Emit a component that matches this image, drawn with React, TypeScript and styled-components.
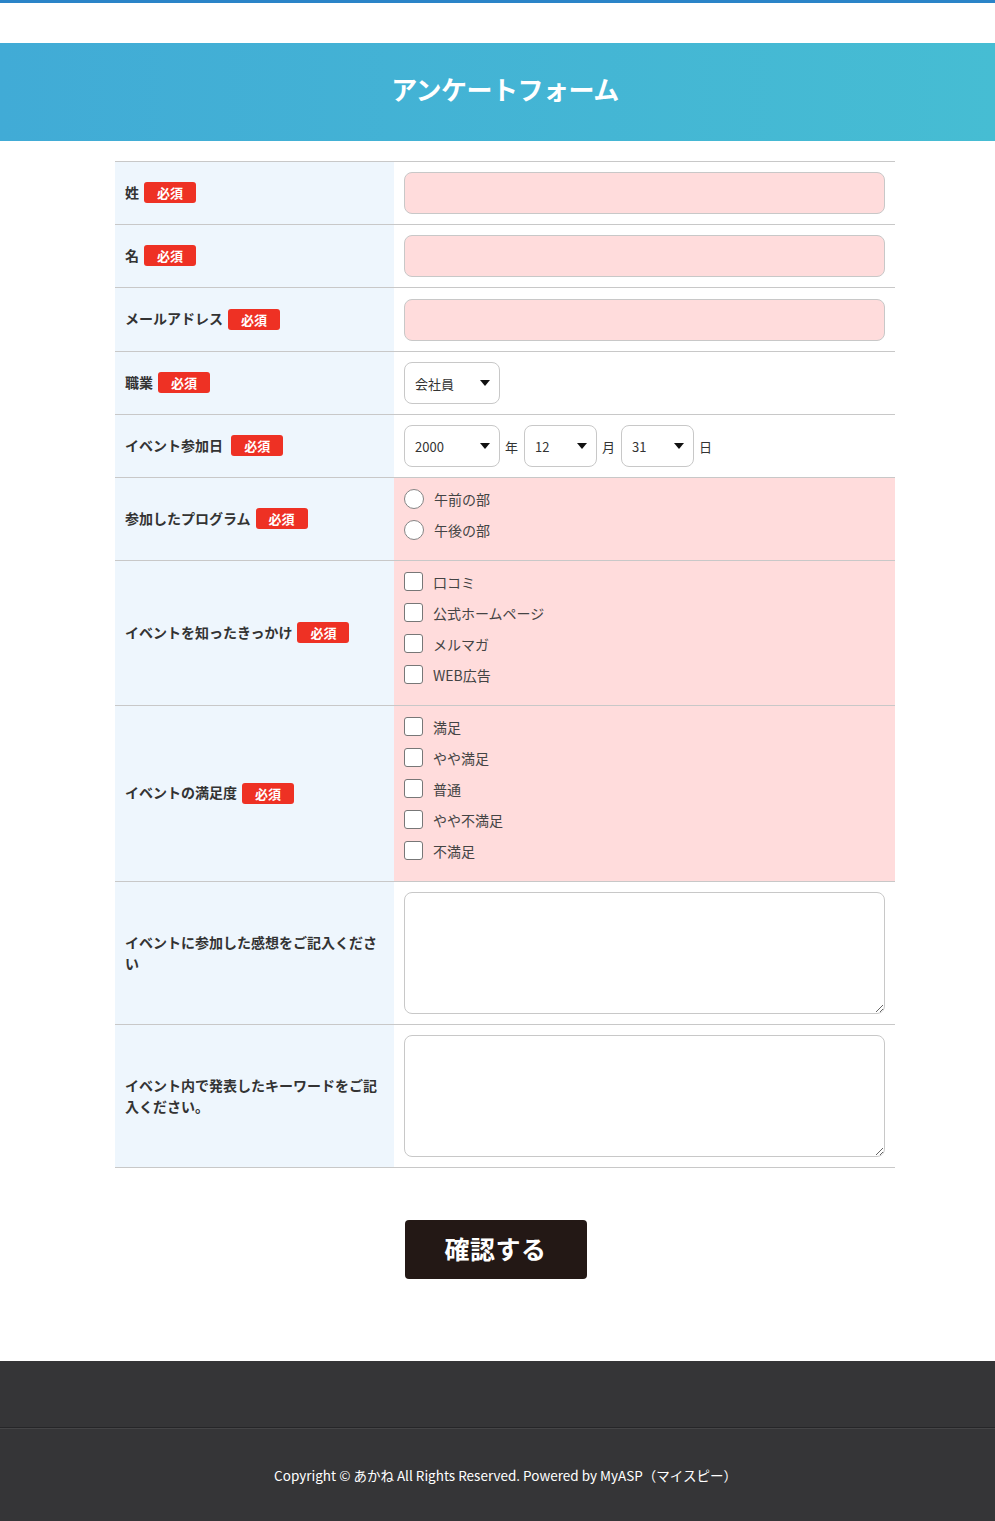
import React from "react";
import styled, { createGlobalStyle } from "styled-components";

const GlobalStyle = createGlobalStyle`
  html, body { margin: 0; padding: 0; }
  body {
    font-family: "Noto Sans CJK JP", "Noto Sans", sans-serif;
    font-size: 14px;
    color: #333;
    background: #fff;
  }
  * { box-sizing: border-box; }
`;

const Page = styled.div`
  border-top: 3px solid #2a84c8;
`;

const Header = styled.header`
  margin-top: 40px;
  height: 98px;
  background: linear-gradient(90deg, #41abd6 0%, #46bdd3 100%);
  display: flex;
  align-items: center;
  justify-content: center;
  padding-left: 15px;
  padding-bottom: 6px;
`;

const Title = styled.h1`
  margin: 0;
  color: #fff;
  font-size: 26px;
  font-weight: 700;
  line-height: 1;
  letter-spacing: -0.5px;
`;

const Main = styled.main`
  padding-left: 15px;
  margin-top: 20px;
`;

const Form = styled.div`
  width: 780px;
  margin: 0 auto;
  border-top: 1px solid #c8c8c8;
`;

const Row = styled.div`
  display: grid;
  grid-template-columns: 279px 1fr;
  border-bottom: 1px solid #c8c8c8;
`;

const LabelCell = styled.div`
  background: #eef6fd;
  padding: 0 10px;
  display: flex;
  align-items: center;
  font-weight: 700;
  font-size: 14px;
  line-height: 21px;
  color: #333;
`;

const LabelText = styled.span`
  white-space: pre-wrap;
`;

const Badge = styled.span`
  display: inline-block;
  vertical-align: middle;
  margin-left: 5px;
  width: 52px;
  height: 21px;
  line-height: 21px;
  text-align: center;
  background: #ee3124;
  color: #fff;
  border-radius: 3px;
  font-size: 13px;
  font-weight: 700;
  font-family: "Noto Sans CJK JP", serif;
  position: relative;
  top: -1px;
`;

const ValueCell = styled.div<{ $pink?: boolean; $choices?: boolean; $tall?: boolean }>`
  background: ${(p) => (p.$pink ? "#ffdcdc" : "#fff")};
  padding: ${(p) => (p.$choices ? "5px 10px 15px" : p.$tall ? "11px 10px 10px" : "10px")};
`;

const TextInput = styled.input`
  display: block;
  width: 100%;
  height: 42px;
  border: 1px solid #c8c8c8;
  border-radius: 8px;
  background: #ffdcdc;
  padding: 0 10px;
  font-size: 14px;
  font-family: inherit;
  outline: none;
`;

const TextArea = styled.textarea`
  display: block;
  width: 100%;
  height: 122px;
  border: 1px solid #c8c8c8;
  border-radius: 8px;
  background: #fff;
  padding: 8px 10px;
  font-size: 14px;
  font-family: inherit;
  resize: vertical;
  outline: none;
  margin: 0;
`;

const SelectWrap = styled.span`
  position: relative;
  display: inline-block;
`;

const Select = styled.select<{ $w: number }>`
  appearance: none;
  -webkit-appearance: none;
  display: block;
  width: ${(p) => p.$w}px;
  height: 42px;
  border: 1px solid #c8c8c8;
  border-radius: 8px;
  background: #fff;
  padding: 0 10px;
  font-size: 13px;
  font-family: inherit;
  color: #333;
  outline: none;
`;

const Arrow = styled.svg`
  position: absolute;
  right: 10px;
  top: 50%;
  margin-top: -3px;
  pointer-events: none;
`;

const DateLine = styled.div`
  display: flex;
  align-items: center;
  gap: 5px;
`;

const Unit = styled.span`
  font-size: 13px;
  color: #333;
  margin-right: 1px;
`;

const OptionList = styled.div`
  display: flex;
  flex-direction: column;
`;

const Option = styled.label`
  display: flex;
  align-items: center;
  gap: 10px;
  height: 31px;
  font-size: 14px;
  color: #444;
`;

const Radio = styled.input.attrs({ type: "radio" })`
  appearance: none;
  -webkit-appearance: none;
  margin: 0;
  width: 20px;
  height: 20px;
  border: 1px solid #858585;
  border-radius: 50%;
  background: #fff;
`;

const Check = styled.input.attrs({ type: "checkbox" })`
  appearance: none;
  -webkit-appearance: none;
  margin: 0;
  width: 19px;
  height: 19px;
  border: 1px solid #777;
  border-radius: 3px;
  background: #fff;
`;

const ButtonArea = styled.div`
  display: flex;
  justify-content: center;
  margin-top: 52px;
  margin-bottom: 82px;
  padding-right: 4px;
`;

const SubmitButton = styled.button`
  width: 182px;
  height: 59px;
  border: none;
  border-radius: 4px;
  background: #231815;
  color: #fff;
  font-family: inherit;
  font-size: 25px;
  font-weight: 700;
  letter-spacing: 0.5px;
  padding: 0 0 4px;
  cursor: pointer;
`;

const Footer = styled.footer`
  background: #353537;
`;

const FooterTop = styled.div`
  height: 67px;
  border-bottom: 1px solid #262628;
`;

const FooterBottom = styled.div`
  height: 93px;
  border-top: 1px solid #454547;
  display: flex;
  align-items: center;
  justify-content: center;
  color: #fff;
  font-size: 13.5px;
  padding-left: 16px;
`;

const ArrowIcon = () => (
  <Arrow width="10" height="6" viewBox="0 0 10 6">
    <path d="M0 0 L10 0 L5 6 Z" fill="#111" />
  </Arrow>
);

const Dropdown: React.FC<{ w: number; value: string; options: string[] }> = ({ w, value, options }) => (
  <SelectWrap>
    <Select $w={w} defaultValue={value}>
      {options.map((o) => (
        <option key={o} value={o}>
          {o}
        </option>
      ))}
    </Select>
    <ArrowIcon />
  </SelectWrap>
);

const Label: React.FC<{ text: string; required?: boolean }> = ({ text, required }) => (
  <LabelCell>
    <LabelText>
      {text}
      {required && <Badge>必須</Badge>}
    </LabelText>
  </LabelCell>
);

const years = Array.from({ length: 60 }, (_, i) => String(1970 + i));
const months = Array.from({ length: 12 }, (_, i) => String(i + 1));
const days = Array.from({ length: 31 }, (_, i) => String(i + 1));

export default function App() {
  return (
    <>
      <GlobalStyle />
      <Page>
        <Header>
          <Title>アンケートフォーム</Title>
        </Header>
        <Main>
          <Form>
            <Row>
              <Label text="姓" required />
              <ValueCell>
                <TextInput type="text" />
              </ValueCell>
            </Row>
            <Row>
              <Label text="名" required />
              <ValueCell>
                <TextInput type="text" />
              </ValueCell>
            </Row>
            <Row>
              <Label text="メールアドレス" required />
              <ValueCell $tall>
                <TextInput type="email" />
              </ValueCell>
            </Row>
            <Row>
              <Label text="職業" required />
              <ValueCell>
                <Dropdown w={96} value="会社員" options={["会社員", "自営業", "学生", "その他"]} />
              </ValueCell>
            </Row>
            <Row>
              <Label text="イベント参加日 " required />
              <ValueCell>
                <DateLine>
                  <Dropdown w={96} value="2000" options={years} />
                  <Unit>年</Unit>
                  <Dropdown w={73} value="12" options={months} />
                  <Unit>月</Unit>
                  <Dropdown w={73} value="31" options={days} />
                  <Unit>日</Unit>
                </DateLine>
              </ValueCell>
            </Row>
            <Row>
              <Label text="参加したプログラム" required />
              <ValueCell $pink $choices>
                <OptionList>
                  <Option>
                    <Radio name="program" />
                    午前の部
                  </Option>
                  <Option>
                    <Radio name="program" />
                    午後の部
                  </Option>
                </OptionList>
              </ValueCell>
            </Row>
            <Row>
              <Label text="イベントを知ったきっかけ" required />
              <ValueCell $pink $choices>
                <OptionList>
                  {["口コミ", "公式ホームページ", "メルマガ", "WEB広告"].map((o) => (
                    <Option key={o}>
                      <Check />
                      {o}
                    </Option>
                  ))}
                </OptionList>
              </ValueCell>
            </Row>
            <Row>
              <Label text="イベントの満足度" required />
              <ValueCell $pink $choices>
                <OptionList>
                  {["満足", "やや満足", "普通", "やや不満足", "不満足"].map((o) => (
                    <Option key={o}>
                      <Check />
                      {o}
                    </Option>
                  ))}
                </OptionList>
              </ValueCell>
            </Row>
            <Row>
              <Label text="イベントに参加した感想をご記入ください" />
              <ValueCell>
                <TextArea />
              </ValueCell>
            </Row>
            <Row>
              <Label text="イベント内で発表したキーワードをご記入ください。" />
              <ValueCell>
                <TextArea />
              </ValueCell>
            </Row>
          </Form>
        </Main>
        <ButtonArea>
          <SubmitButton type="button">確認する</SubmitButton>
        </ButtonArea>
        <Footer>
          <FooterTop />
          <FooterBottom>Copyright © あかね All Rights Reserved. Powered by MyASP（マイスピー）</FooterBottom>
        </Footer>
      </Page>
    </>
  );
}
